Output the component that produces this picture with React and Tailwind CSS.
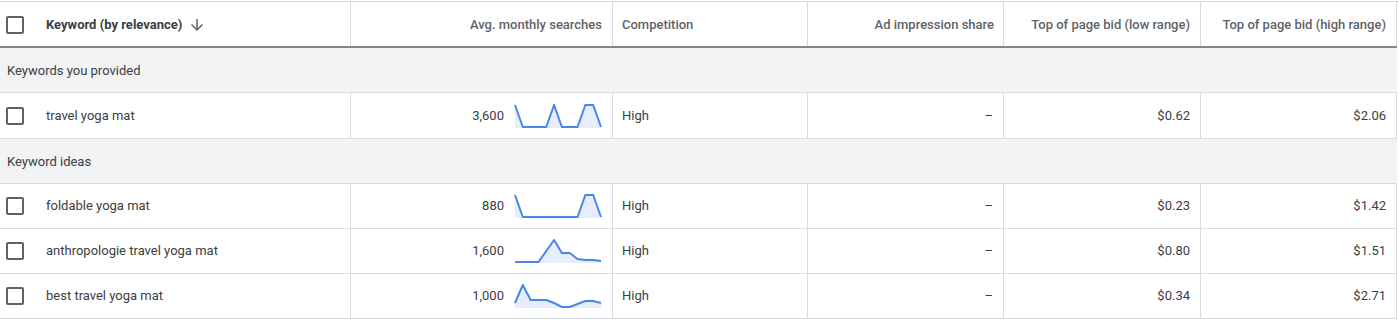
import React from 'react';

const rows = {
  provided: [
    { keyword: 'travel yoga mat', searches: '3,600', trend: [1, 23, 23, 23, 23, 1, 23, 23, 23, 1, 1, 23], competition: 'High', low: '$0.62', high: '$2.06', tall: true },
  ],
  ideas: [
    { keyword: 'foldable yoga mat', searches: '880', trend: [1, 23, 23, 23, 23, 23, 23, 23, 23, 1, 1, 23], competition: 'High', low: '$0.23', high: '$1.42' },
    { keyword: 'anthropologie travel yoga mat', searches: '1,600', trend: [23, 23, 23, 23, 12, 1, 14, 14, 20, 21, 21, 22], competition: 'High', low: '$0.80', high: '$1.51' },
    { keyword: 'best travel yoga mat', searches: '1,000', trend: [19, 1, 16, 16, 16, 19, 23, 23, 20, 17, 17, 19], competition: 'High', low: '$0.34', high: '$2.71' },
  ],
};

const cols = 'grid grid-cols-[351px_262px_195px_196px_197px_196px] w-[1397px]';

function Checkbox() {
  return <div className="w-[18px] h-[18px] ml-[6px] border-2 border-[#5f6368] rounded-[2px] shrink-0" />;
}

function Sparkline({ values }) {
  const pts = values.map((v, i) => [1 + (i * 86) / 11, v]);
  const line = pts.map((p) => p.join(',')).join(' ');
  const area = `1,24 ${line} 87,24`;
  return (
    <svg width="88" height="24" viewBox="0 0 88 24" className="shrink-0">
      <polygon points={area} fill="#e6edfb" />
      <polyline points={line} fill="none" stroke="#4a85ea" strokeWidth="2" strokeLinejoin="round" />
    </svg>
  );
}

function GroupRow({ label }) {
  return (
    <div className="w-[1397px] h-[45px] bg-[#f1f3f4] border-b border-[#dadce0] flex items-center pl-[7px] pt-px text-[13px] text-[#3c4043]">
      {label}
    </div>
  );
}

function DataRow({ row }) {
  const h = row.tall ? 'h-[46px]' : 'h-[45px]';
  return (
    <div className={`${cols} ${h} border-b border-[#dadce0] text-[13px] text-[#3c4043]`}>
      <div className="flex items-center border-r border-[#dadce0]">
        <Checkbox />
        <span className="ml-[22px]">{row.keyword}</span>
      </div>
      <div className="flex items-center justify-end gap-[10px] pr-[10px] border-r border-[#dadce0]">
        <span>{row.searches}</span>
        <Sparkline values={row.trend} />
      </div>
      <div className="flex items-center pl-[9px] border-r border-[#dadce0]">{row.competition}</div>
      <div className="flex items-center justify-end pr-[10px] border-r border-[#dadce0]">–</div>
      <div className="flex items-center justify-end pr-[10px] border-r border-[#dadce0]">{row.low}</div>
      <div className="flex items-center justify-end pr-[10px] border-r border-[#dadce0]">{row.high}</div>
    </div>
  );
}

export default function App() {
  return (
    <div className="bg-white w-[1399px] h-[320px] overflow-hidden pt-px font-['Roboto',sans-serif]">
      <div className="border-t border-[#dadce0]">
        {/* Header */}
        <div className={`${cols} h-[46px] border-b-2 border-[#80868b] text-[13px] font-medium text-[#5f6368]`}>
          <div className="flex items-center pt-px border-r border-[#dadce0]">
            <Checkbox />
            <span className="ml-[22px] font-bold text-[#3c4043]">Keyword (by relevance)</span>
            <svg width="18" height="18" viewBox="0 0 24 24" className="ml-[6px]" fill="#5f6368">
              <path d="M20 12l-1.41-1.41L13 16.17V4h-2v12.17l-5.58-5.59L4 12l8 8 8-8z" />
            </svg>
          </div>
          <div className="flex items-center justify-end pt-px pr-[10px] border-r border-[#dadce0]">Avg. monthly searches</div>
          <div className="flex items-center pt-px pl-[9px] border-r border-[#dadce0]">Competition</div>
          <div className="flex items-center justify-end pt-px pr-[9px] border-r border-[#dadce0]">Ad impression share</div>
          <div className="flex items-center justify-end pt-px pr-[10px] border-r border-[#dadce0]">Top of page bid (low range)</div>
          <div className="flex items-center justify-end pt-px pr-[10px] border-r border-[#dadce0]">Top of page bid (high range)</div>
        </div>

        <GroupRow label="Keywords you provided" />
        {rows.provided.map((r) => (
          <DataRow key={r.keyword} row={r} />
        ))}
        <GroupRow label="Keyword ideas" />
        {rows.ideas.map((r) => (
          <DataRow key={r.keyword} row={r} />
        ))}
      </div>
    </div>
  );
}
